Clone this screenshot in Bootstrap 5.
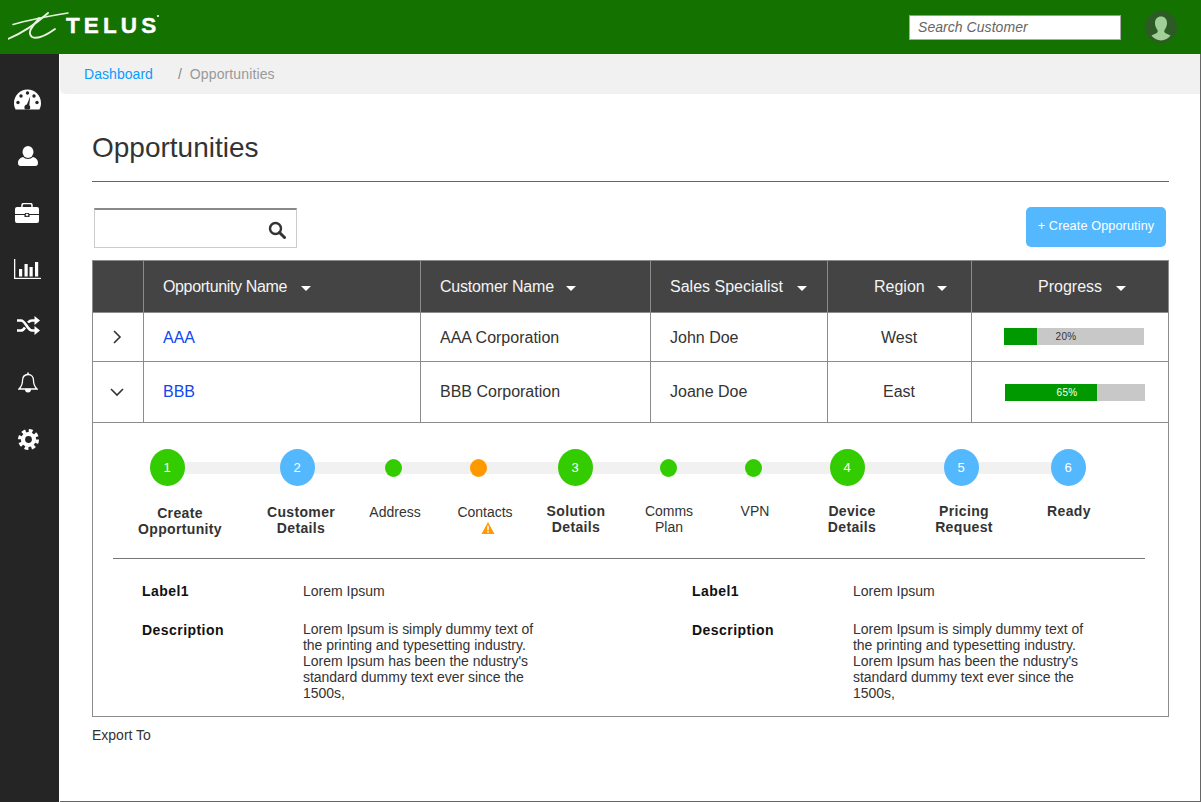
<!DOCTYPE html>
<html lang="en">
<head>
<meta charset="utf-8">
<title>Opportunities</title>
<link rel="stylesheet" href="https://cdn.jsdelivr.net/npm/bootstrap@5.3.0/dist/css/bootstrap.min.css">
<style>
html,body{height:100%;overflow:hidden;}
body{font-family:"Liberation Sans",Arial,sans-serif;color:#333;background:#fff;}
.topbar{height:54px;background:#147300;padding:0 24px 0 8px;}
.logo-mark{width:64px;height:34px;margin-top:2px;}
.logo-word{color:#fff;font-weight:700;font-size:22.5px;letter-spacing:4.1px;line-height:1;margin-left:-6px;margin-top:-2px;-webkit-text-stroke:.4px #fff;}
.logo-tm{width:2px;height:2px;background:#fff;border-radius:50%;align-self:flex-start;margin-top:6px;margin-left:-3px;}
.cust-search{width:212px;height:25px;border:1px solid #aaa;border-top-color:#999;border-radius:0;padding:0 8px;font-size:14px;font-style:italic;letter-spacing:.05px;margin-right:24px;}
.cust-search::placeholder{color:#666;opacity:1;}
.avatar-ic{width:32px;height:32px;display:block;}
.layout{height:748px;}
.side-nav{width:59px;background:#252525;padding:17px 5px 0 0;flex:none;}
.side-slot{height:56.67px;}
.slot-right{padding-left:2px;}
.page-body{border-right:1px solid #666;border-bottom:1px solid #666;margin-left:1px;min-width:0;}
.crumbs{height:40px;background:#f1f1f1;border-radius:0 0 0 5px;padding-left:24px;font-size:14px;}
.crumbs a{color:#0d9aff;text-decoration:none;letter-spacing:.05px;}
.crumb-sep{color:#888;margin-left:25px;margin-right:8px;}
.crumb-now{color:#999;letter-spacing:.12px;}
.page-wrap{padding:0 31px 0 32px;}
.page-title{font-size:28px;font-weight:400;line-height:34px;margin:37px 0 16px;color:#333;}
.page-rule{margin:0 0 25px;border:0;border-top:1px solid #666;opacity:1;}
.tools{height:41px;margin-bottom:12px;padding:0 3px 0 2px;}
.find-box{width:203px;height:40px;margin-top:1px;border:1px solid #ccc;border-top:2px solid #888;padding:3px 10px 0 0;}
.create-btn{width:140px;height:40px;background:#54b8ff;border:0;border-radius:5px;color:#fff;font-size:12.7px;padding:0;letter-spacing:.1px;}
.opp-table{table-layout:fixed;width:1077px;margin:0;border-color:#8c8c8c;font-size:16px;color:#333;}
.opp-table>:not(caption)>*>*{padding:0 0 0 19px;vertical-align:middle;color:#333;border-color:#8c8c8c;}
.opp-table>thead>tr>th{--bs-table-bg:#444;background:#444;color:#f4f4f4;font-weight:400;}
.col-a{width:51px;}.col-b{width:277px;}.col-c{width:230px;}.col-d{width:177px;}.col-e{width:144px;}
.row-h{height:52px;}.row-1{height:49px;}.row-2{height:61px;}
.opp-table>tbody>.row-1>td{padding-top:2px;}
.opp-table>:not(caption)>*>.cell-mid{padding-left:0;padding-right:1px;text-align:center;}
.opp-table>tbody>tr>.cell-chev{padding:0 2px 2px 0;text-align:center;}
.opp-table>tbody>tr>.cell-bar{padding:0 0 0 0;}
.opp-table>tbody>.row-1>.cell-bar{padding:0 0 2px 0;}
.opp-table>:not(caption)>*>.cell-detail{padding:0;}
.opp-table>thead>tr>th.head-region{padding-left:46px;}
.opp-table>thead>tr>th.head-progress{padding-left:66px;}
.head-tight-a{letter-spacing:-.37px;}
.head-tight-b{letter-spacing:-.2px;}
.sort-caret{display:inline-block;width:0;height:0;margin-left:10px;vertical-align:1px;border-left:5px solid transparent;border-right:5px solid transparent;border-top:5px solid #fff;}
.head-tight-b .sort-caret,.head-region .sort-caret{margin-left:8px;}
.opp-link{color:#0f47f0;text-decoration:none;}
.bar-wrap{width:140px;height:17px;border-radius:0;background:#c8c8c8;position:relative;margin-left:32px;}
.bar-wrap.nudge{margin-left:33px;}
.bar-fill{background:#009900;}
.bar-label{position:absolute;left:0;width:124px;text-align:center;top:0;line-height:17px;font-size:10px;letter-spacing:.3px;color:#333;}
.bar-label.on-fill{color:#fff;}
.track-box{position:relative;margin:26px 0 0;}
.track-line{position:absolute;left:74px;width:901px;top:13px;height:12px;background:#f1f1f1;}
.step-dots,.step-names{display:grid;}
.step-dots{position:relative;height:37px;align-items:center;justify-items:center;grid-template-columns:148px 112px 80px 90px 104px 82px 88px 100px 128px 86px;}
.step-names{grid-template-columns:172px 72px 114px 68px 114px 70px 102px 94px 130px 80px;margin-top:17px;text-align:center;font-size:14px;line-height:16px;height:55px;}
.dot-big{width:35px;height:37px;border-radius:50%;color:#fff;font-size:13px;display:flex;align-items:center;justify-content:center;}
.dot-small{width:17px;height:18px;border-radius:50%;}
.tone-green{background:#3c0;}.tone-blue{background:#54b8ff;}.tone-orange{background:#f90;}
.step-strong{font-weight:700;letter-spacing:.35px;color:#333;}
.lift-0{margin-top:2px;}.lift-1{margin-top:1px;}.lift-2{margin-top:0;}
.name-right{padding-left:2px;}
.warn-ic{display:block;margin:2px 0 0 30px;width:14px;height:12px;}
.detail-rule{margin:0 23px 0 20px;border:0;border-top:1px solid #777;opacity:1;}
.facts{display:grid;grid-template-columns:161px 389px 161px 1fr;padding:24px 0 14px 49px;font-size:14px;line-height:16px;color:#333;}
.fact-key{font-weight:700;color:#111;letter-spacing:.45px;}
.fact-val{max-width:236px;}
.fact-gap{margin-top:23px;}
.fact-text{margin-top:22px;margin-bottom:1px;letter-spacing:-.03px;}
.export-line{font-size:14px;margin-top:8px;color:#333;}
</style>
</head>
<body>
<nav class="navbar topbar flex-nowrap justify-content-between">
  <a class="d-flex align-items-center text-decoration-none" href="#">
    <svg class="logo-mark" viewBox="0 0 64 34" fill="none" stroke="#e8f2e4" stroke-linecap="round" aria-hidden="true">
      <path d="M5 13.500C20 9 42 5 60 2" stroke-width="1.500"/>
      <path d="M0 28C14 22 29 12 40 2" stroke-width="1.900"/>
      <path d="M31 7C26 14 18 21 24 26C30 29 40 23 47 18" stroke-width="1.900"/>
    </svg>
    <span class="logo-word">TELUS</span><span class="logo-tm"></span>
  </a>
  <div class="d-flex align-items-center">
    <input class="form-control cust-search" type="text" placeholder="Search Customer">
    <svg class="avatar-ic" viewBox="0 0 32 32" aria-hidden="true">
      <circle cx="16" cy="16" r="16" fill="#2e5a25"/>
      <path d="M16 5.500c3.600 0 6 2.600 6 6.500 0 3-1.200 5.500-2.600 7.200-.4 1.600.2 2.600 1.800 3.400 1.400.7 3 1.100 4.300 2-2 2.900-5.700 4.900-9.500 4.900s-7.500-2-9.500-4.900c1.300-.9 2.900-1.300 4.300-2 1.600-.8 2.200-1.800 1.800-3.400C11.200 17.500 10 15 10 12c0-3.900 2.400-6.500 6-6.500z" fill="#a1cf98"/>
    </svg>
  </div>
</nav>
<div class="d-flex layout">
  <aside class="side-nav d-flex flex-column">
    <div class="side-slot d-flex align-items-center justify-content-center">
      <svg width="27" height="21" viewBox="0 0 27 21" aria-hidden="true">
        <path d="M1.600 20.500C.600 18.600 0 16.500 0 14.200 0 6.400 6 .5 13.500.5S27 6.400 27 14.200c0 2.300-.6 4.400-1.600 6.300z" fill="#fff"/>
        <g fill="#252525"><circle cx="4" cy="13.500" r="1.700"/><circle cx="7" cy="7" r="1.700"/><circle cx="13.500" cy="4" r="1.700"/><circle cx="20" cy="7" r="1.700"/><circle cx="23" cy="13.500" r="1.700"/><path d="M16.200 7.500l-.9 8.500a2.800 2.800 0 0 1 .9 2.500c0 1-.5 2-1.200 2h-3.500c-.8-.5-1.300-1.500-1.100-2.600.2-1.300 1.200-2.300 2.500-2.500z"/></g>
      </svg>
    </div>
    <div class="side-slot slot-right d-flex align-items-center justify-content-center">
      <svg width="20" height="20" viewBox="0 0 20 20" fill="#fff" aria-hidden="true">
        <ellipse cx="10" cy="6" rx="5.500" ry="6"/>
        <path d="M0 17c0-3.700 2.500-5.200 5-6 1.300 1.200 3 1.900 5 1.900s3.700-.7 5-1.900c2.500.8 5 2.300 5 6 0 1.800-1 3-2.500 3h-15C1 20 0 18.800 0 17z"/>
      </svg>
    </div>
    <div class="side-slot d-flex align-items-center justify-content-center">
      <svg width="24" height="20" viewBox="0 0 24 20" aria-hidden="true">
        <path d="M7 4.500V2.200C7 1 8 .5 9 .5h6c1 0 2 .5 2 1.700v2.300" fill="none" stroke="#fff" stroke-width="1.500"/>
        <path d="M2 4h20a2 2 0 0 1 2 2v5H0V6a2 2 0 0 1 2-2z" fill="#fff"/>
        <path d="M0 12h9.500v2h5v-2H24v6a2 2 0 0 1-2 2H2a2 2 0 0 1-2-2z" fill="#fff"/>
        <rect x="10.300" y="10.500" width="3.400" height="2.700" fill="#fff" stroke="#252525" stroke-width=".8"/>
      </svg>
    </div>
    <div class="side-slot d-flex align-items-center justify-content-center">
      <svg width="27" height="20" viewBox="0 0 27 20" fill="#fff" aria-hidden="true">
        <rect x="0" y="0" width="1.300" height="20"/><rect x="0" y="18.800" width="27" height="1.200"/>
        <rect x="5" y="10" width="3.200" height="7.500"/><rect x="10.500" y="5" width="3.200" height="12.500"/><rect x="15.500" y="8" width="3.200" height="9.500"/><rect x="21" y="3" width="3.200" height="14.500"/>
      </svg>
    </div>
    <div class="side-slot slot-right d-flex align-items-center justify-content-center">
      <svg width="23" height="19" viewBox="0 0 23 19" fill="none" aria-hidden="true">
        <path d="M0 4.500h4c4.500 0 6.500 10 11 10h3M0 14.500h4c1.700 0 3-1.400 4-3M11 6.500c1-1.100 2.300-2 4-2h3" stroke="#fff" stroke-width="2.600"/>
        <path d="M17.500 0L23 4.500 17.500 9zM17.500 10L23 14.500 17.500 19z" fill="#fff"/>
      </svg>
    </div>
    <div class="side-slot slot-right d-flex align-items-center justify-content-center">
      <svg width="20" height="21" viewBox="0 0 20 21" fill="none" stroke="#fff" stroke-width="1.300" aria-hidden="true">
        <path d="M10 2.500c-3.500 0-5.500 2.600-5.500 6 0 4-1 6-3.500 8.500h18c-2.500-2.500-3.500-4.500-3.500-8.500 0-3.400-2-6-5.500-6z"/>
        <path d="M10 .5v2" stroke-width="1.600"/>
        <path d="M7.700 17.500a2.300 2.300 0 0 0 4.600 0z" fill="#fff"/>
      </svg>
    </div>
    <div class="side-slot slot-right d-flex align-items-center justify-content-center">
      <svg width="21" height="21" viewBox="0 0 21 21" fill="none" aria-hidden="true">
        <circle cx="10.500" cy="10.500" r="8.800" stroke="#fff" stroke-width="3.400" stroke-dasharray="3.800 3.110"/>
        <circle cx="10.500" cy="10.500" r="5.500" stroke="#fff" stroke-width="4.200"/>
      </svg>
    </div>
  </aside>
  <div class="page-body flex-grow-1">
    <div class="crumbs d-flex align-items-center">
      <a href="#">Dashboard</a><span class="crumb-sep">/</span><span class="crumb-now">Opportunities</span>
    </div>
    <div class="page-wrap">
      <h1 class="page-title">Opportunities</h1>
      <hr class="page-rule">
      <div class="tools d-flex justify-content-between align-items-start">
        <div class="find-box d-flex align-items-center justify-content-end">
          <svg width="18" height="18" viewBox="0 0 18 18" fill="none" stroke="#333" aria-hidden="true">
            <circle cx="7.500" cy="7.500" r="5.500" stroke-width="2.400"/><path d="M11.500 11.500l5 5" stroke-width="3" stroke-linecap="round"/>
          </svg>
        </div>
        <button class="btn create-btn" type="button">+ Create Opporutiny</button>
      </div>
      <table class="table table-bordered opp-table">
        <colgroup><col class="col-a"><col class="col-b"><col class="col-c"><col class="col-d"><col class="col-e"><col></colgroup>
        <thead>
          <tr class="row-h">
            <th></th>
            <th class="head-tight-a">Opportunity Name <span class="sort-caret"></span></th>
            <th class="head-tight-b">Customer Name <span class="sort-caret"></span></th>
            <th>Sales Specialist <span class="sort-caret"></span></th>
            <th class="head-region">Region <span class="sort-caret"></span></th>
            <th class="head-progress">Progress <span class="sort-caret"></span></th>
          </tr>
        </thead>
        <tbody>
          <tr class="row-1">
            <td class="cell-chev"><svg width="10" height="14" viewBox="0 0 10 14" fill="none" stroke="#333" stroke-width="1.600" aria-hidden="true"><path d="M2 1l6 6-6 6"/></svg></td>
            <td><a class="opp-link" href="#">AAA</a></td>
            <td>AAA Corporation</td>
            <td>John Doe</td>
            <td class="cell-mid">West</td>
            <td class="cell-bar">
              <div class="progress bar-wrap" role="progressbar" aria-valuenow="20" aria-valuemin="0" aria-valuemax="100">
                <div class="progress-bar bar-fill" style="width:23.500%"></div><span class="bar-label">20%</span>
              </div>
            </td>
          </tr>
          <tr class="row-2">
            <td class="cell-chev"><svg width="14" height="10" viewBox="0 0 14 10" fill="none" stroke="#333" stroke-width="1.600" aria-hidden="true"><path d="M1 2l6 6 6-6"/></svg></td>
            <td><a class="opp-link" href="#">BBB</a></td>
            <td>BBB Corporation</td>
            <td>Joane Doe</td>
            <td class="cell-mid">East</td>
            <td class="cell-bar">
              <div class="progress bar-wrap nudge" role="progressbar" aria-valuenow="65" aria-valuemin="0" aria-valuemax="100">
                <div class="progress-bar bar-fill" style="width:65.700%"></div><span class="bar-label on-fill">65%</span>
              </div>
            </td>
          </tr>
          <tr>
            <td class="cell-detail" colspan="6">
              <div class="track-box">
                <div class="track-line"></div>
                <div class="step-dots">
                  <div class="dot-big tone-green">1</div>
                  <div class="dot-big tone-blue">2</div>
                  <div class="dot-small tone-green"></div>
                  <div class="dot-small tone-orange"></div>
                  <div class="dot-big tone-green">3</div>
                  <div class="dot-small tone-green"></div>
                  <div class="dot-small tone-green"></div>
                  <div class="dot-big tone-green">4</div>
                  <div class="dot-big tone-blue">5</div>
                  <div class="dot-big tone-blue">6</div>
                </div>
              </div>
              <div class="step-names">
                <div class="step-strong lift-0 name-right">Create<br>Opportunity</div>
                <div class="step-strong lift-1">Customer<br>Details</div>
                <div class="lift-1 name-right">Address</div>
                <div class="lift-1">Contacts
                  <svg class="warn-ic" viewBox="0 0 14 13" aria-hidden="true"><path d="M7 0L14 13H0z" fill="#f90"/><rect x="6.200" y="4" width="1.600" height="5" fill="#fff"/><rect x="6.200" y="10" width="1.600" height="1.600" fill="#fff"/></svg>
                </div>
                <div class="step-strong lift-2">Solution<br>Details</div>
                <div class="lift-2 name-right">Comms<br>Plan</div>
                <div class="lift-2 name-right">VPN</div>
                <div class="step-strong lift-2">Device<br>Details</div>
                <div class="step-strong lift-2">Pricing<br>Request</div>
                <div class="step-strong lift-2">Ready</div>
              </div>
              <hr class="detail-rule">
              <div class="facts">
                <div class="fact-key">Label1</div><div class="fact-val">Lorem Ipsum</div>
                <div class="fact-key">Label1</div><div class="fact-val">Lorem Ipsum</div>
                <div class="fact-key fact-gap">Description</div><div class="fact-val fact-text">Lorem Ipsum is simply dummy text of the printing and typesetting industry. Lorem Ipsum has been the ndustry's standard dummy text ever since the 1500s,</div>
                <div class="fact-key fact-gap">Description</div><div class="fact-val fact-text">Lorem Ipsum is simply dummy text of the printing and typesetting industry. Lorem Ipsum has been the ndustry's standard dummy text ever since the 1500s,</div>
              </div>
            </td>
          </tr>
        </tbody>
      </table>
      <div class="export-line">Export To</div>
    </div>
  </div>
</div>
<script src="https://cdn.jsdelivr.net/npm/bootstrap@5.3.0/dist/js/bootstrap.bundle.min.js"></script>
</body>
</html>
